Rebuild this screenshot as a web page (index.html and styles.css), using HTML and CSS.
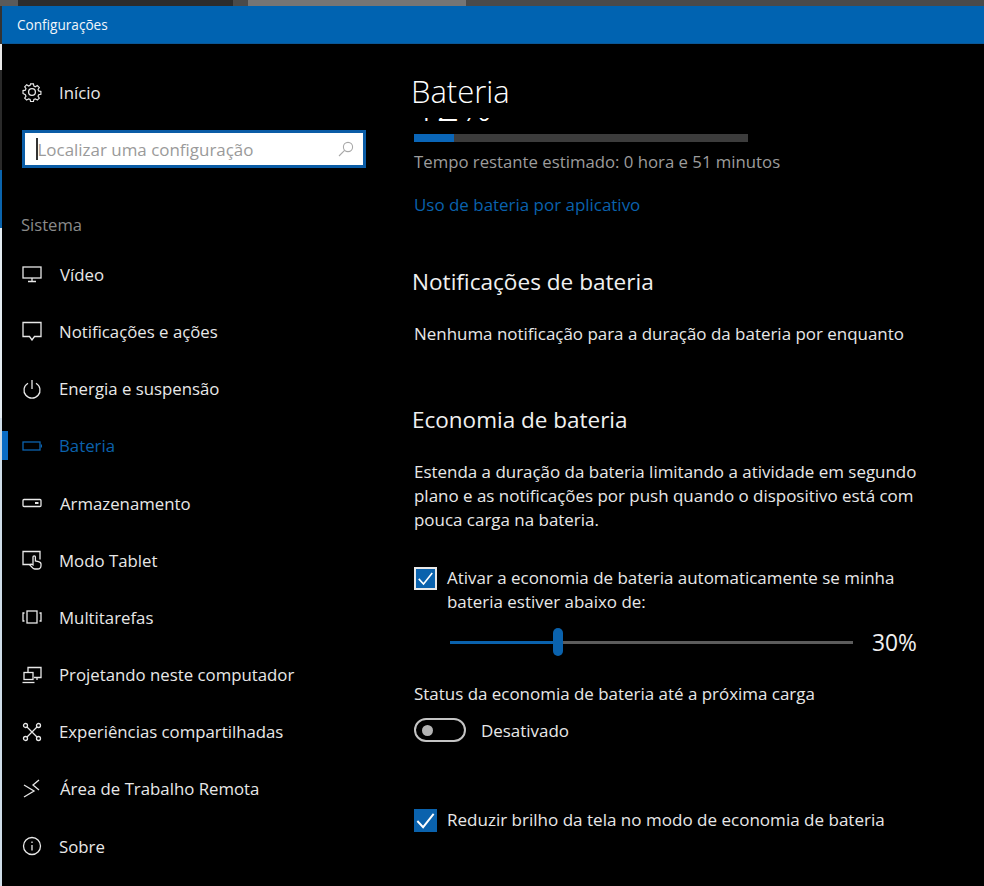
FILE: index.html
```html
<!DOCTYPE html>
<html lang="pt-BR">
<head>
<meta charset="utf-8">
<title>Configurações</title>
<link rel="stylesheet" href="styles.css">
</head>
<body>
<div class="desktop">
  <div class="tabstrip">
    <span class="tab-a"></span>
    <span class="tab-b"></span>
    <span class="tab-c"></span>
  </div>
  <div class="desktop-body">
    <div class="edge">
      <span class="e e1"></span><span class="e e2"></span><span class="e e3"></span><span class="e e4"></span><span class="e e5"></span><span class="e e6"></span>
    </div>
    <div class="window">
      <header class="titlebar">Configurações</header>
      <div class="main">
        <nav class="nav">
          <a class="home">
            <svg class="ico" viewBox="0 0 20 20"><path d="M8.4 1h3.2l.5 2.5 1.6.7 2.2-1.4 2.2 2.3-1.4 2.1.7 1.6 2.5.5v3.2l-2.5.5-.7 1.6 1.4 2.2-2.2 2.2-2.2-1.4-1.6.7-.5 2.4H8.4l-.5-2.4-1.6-.7-2.2 1.4-2.2-2.2 1.4-2.2-.7-1.6L0 11.6V8.4l2.6-.5.7-1.6-1.4-2.1 2.2-2.3 2.2 1.4 1.6-.7z" transform="translate(1 1) scale(.9)"/><circle cx="10" cy="10" r="3.4"/></svg>
            <span>Início</span>
          </a>
          <div class="search">
            <span class="caret"></span>
            <span class="placeholder">Localizar uma configuração</span>
            <svg class="search-ico" viewBox="0 0 16 16"><circle cx="10" cy="6" r="4.6"/><path d="M6.6 9.4 1 15"/></svg>
          </div>
          <div class="group">Sistema</div>
          <ul class="menu">
            <li class="item"><svg class="ico" viewBox="0 0 20 20"><rect x="1" y="3" width="18" height="11"/><path d="M10 14v3M6 17.5h8"/></svg><span class="tx-v">Vídeo</span></li>
            <li class="item"><svg class="ico" viewBox="0 0 20 20"><path d="M1 1.5h18v14h-6.5L10 19l-2.5-3.5H1z"/></svg><span>Notificações e ações</span></li>
            <li class="item"><svg class="ico" viewBox="0 0 20 20"><path d="M6 4.2a8 8 0 1 0 8 0M10 1v9"/></svg><span>Energia e suspensão</span></li>
            <li class="item active"><svg class="ico" viewBox="0 0 20 20"><rect x="1" y="6" width="17" height="8"/><path d="M19.4 8.5v3"/></svg><span>Bateria</span></li>
            <li class="item"><svg class="ico" viewBox="0 0 20 20"><rect x="1" y="6.5" width="18" height="7" rx="1"/><path d="M13 10h3.5" class="thick"/></svg><span class="tx-v">Armazenamento</span></li>
            <li class="item"><svg class="ico" viewBox="0 0 20 20"><path d="M8 14.500H1V1.500h17v8"/><path d="M13 19c-2 0-3-1.500-5-4l1-1 2 1V7a1.200 1.200 0 0 1 2.400 0v4l3 .6c1.500.3 2.600 1 2.600 2.400v1.500c0 2-1.500 3.500-3.500 3.500z"/></svg><span>Modo Tablet</span></li>
            <li class="item"><svg class="ico" viewBox="0 0 20 20"><rect x="5" y="4" width="10" height="12"/><path d="M2.5 6H1v8h1.5M17.5 6H19v8h-1.5"/></svg><span>Multitarefas</span></li>
            <li class="item"><svg class="ico" viewBox="0 0 20 20"><path d="M6 7V2.500h13v10h-7M15 12.500v2.500"/><rect x="2" y="7.500" width="9" height="7"/><path d="M0.500 17.500h12"/></svg><span>Projetando neste computador</span></li>
            <li class="item"><svg class="ico" viewBox="0 0 20 20"><circle cx="3.500" cy="3.500" r="2"/><circle cx="16.500" cy="3.500" r="2"/><circle cx="3.500" cy="16.500" r="2"/><circle cx="16.500" cy="16.500" r="2"/><path d="M5 5l10 10M15 5 5 15"/></svg><span>Experiências compartilhadas</span></li>
            <li class="item"><svg class="ico" viewBox="0 0 20 20"><path d="M2 6l10 6-10 6M17 1l-6 5 6 5"/></svg><span class="tx-v">Área de Trabalho Remota</span></li>
            <li class="item"><svg class="ico" viewBox="0 0 20 20"><circle cx="10" cy="10" r="8.500"/><path d="M10 9v5.500M10 5.500v1.500"/></svg><span>Sobre</span></li>
          </ul>
        </nav>
        <main class="content">
          <h1 class="page-title">Bateria</h1>
          <div class="clip"><div class="percent">12%</div></div>
          <div class="bar"><div class="bar-fill" style="width:12%"></div></div>
          <p class="estimate">Tempo restante estimado: 0 hora e 51 minutos</p>
          <a class="link">Uso de bateria por aplicativo</a>
          <h2 class="h-notif">Notificações de bateria</h2>
          <p class="none">Nenhuma notificação para a duração da bateria por enquanto</p>
          <h2 class="h-saver">Economia de bateria</h2>
          <p class="desc">Estenda a duração da bateria limitando a atividade em segundo plano e as notificações por push quando o dispositivo está com pouca carga na bateria.</p>
          <div class="check-row">
            <span class="check outlined"><svg viewBox="0 0 24 24"><path d="M3.500 12.500 9.500 19 20.500 5"/></svg></span>
            <span class="check-label">Ativar a economia de bateria automaticamente se minha bateria estiver abaixo de:</span>
          </div>
          <div class="slider-row">
            <div class="slider"><div class="fill"></div><div class="thumb"></div><div class="rest"></div></div>
            <span class="value">30%</span>
          </div>
          <p class="status">Status da economia de bateria até a próxima carga</p>
          <div class="toggle-row"><span class="toggle"><span class="knob"></span></span><span>Desativado</span></div>
          <div class="check-row last">
            <span class="check"><svg viewBox="0 0 24 24"><path d="M3.500 12.500 9.500 19 20.500 5"/></svg></span>
            <span class="check-label">Reduzir brilho da tela no modo de economia de bateria</span>
          </div>
        </main>
      </div>
    </div>
  </div>
</div>
</body>
</html>
```
FILE: styles.css
```css
* { box-sizing: border-box; }
html, body { margin: 0; padding: 0; height: 100%; background: #000; overflow: hidden; }
body { font-family: "Open Sans", "Noto Sans", sans-serif; color: #e8e8e8; font-size: 16.950px; }
ul { list-style: none; margin: 0; padding: 0; }
p, h1, h2 { margin: 0; font-weight: 400; }

.desktop { width: 984px; height: 886px; display: flex; flex-direction: column; }
.tabstrip { height: 6px; background: #4a4a4a; display: flex; flex: none; }
.tab-a { width: 18px; background: #5a5a5a; }
.tab-b { width: 215px; background: #2c2c2c; margin-right: 15px; }
.tab-c { width: 218px; background: #757575; }
.desktop-body { flex: 1; display: flex; min-height: 0; }
.edge { width: 2px; flex: none; display: flex; flex-direction: column; }
.e { display: block; }
.e1 { height: 38px; background: #333; }
.e2 { height: 26px; background: #e8e8e8; }
.e3 { height: 100px; background: #2a2a2a; }
.e4 { height: 58px; background: #0a64ad; }
.e5 { height: 190px; background: #e4ecf2; }
.e6 { flex: 1; background: #cfdde8; }

.window { flex: 1; display: flex; flex-direction: column; min-width: 0; }
.titlebar { height: 38px; flex: none; background: #0063b1; color: #f2f6fa; font-size: 13.600px; line-height: 38px; padding-left: 15px; border-bottom: 1px solid #0b5796; }
.main { flex: 1; display: flex; min-height: 0; background: #000; }

.nav { width: 410px; flex: none; display: flex; flex-direction: column; font-size: 16.800px; }
.home { display: flex; align-items: center; height: 40px; margin-top: 28px; padding-left: 20px; gap: 17px; }
.ico { width: 20px; height: 20px; flex: none; fill: none; stroke: #e8e8e8; stroke-width: 1.300; }
.search { margin: 18px 0 0 20px; width: 344px; height: 38px; background: #fff; border: 3px solid #0a5ca6; display: flex; align-items: center; padding: 0 9px 0 11px; color: #9a9a9a; font-size: 16.950px; }
.caret { width: 1.500px; height: 22px; background: #333; flex: none; }
.placeholder { flex: 1; }
.search-ico { width: 16px; height: 16px; fill: none; stroke: #a8a8a8; stroke-width: 1.100; }
.group { margin: 45px 0 0 19px; color: #8a8a8a; height: 24px; line-height: 24px; font-size: 16.600px; }
.menu { margin-top: 8.700px; }
.item { height: 57.200px; display: flex; align-items: center; gap: 17px; padding-left: 20px; position: relative; }
.tx-v { margin-left: 1px; }
.item.active { color: #0b62ad; }
.item.active .ico { stroke: #0b62ad; }
.item.active::before { content: ""; position: absolute; left: 0; top: 14px; width: 6px; height: 29px; background: #0a6cc4; }
.thick { stroke-width: 2; }

.content { flex: 1; padding-left: 2px; min-width: 0; }
.page-title { font-size: 31px; color: #fff; height: 42px; line-height: 42px; margin-top: 26px; margin-left: -3px; font-weight: 300; }
.clip { height: 4px; margin-top: 6px; overflow: hidden; }
.percent { font-size: 40px; line-height: 40px; color: #fff; margin-top: -32px; font-weight: 300; }
.bar { width: 334px; height: 8px; background: #3c3c3c; margin-top: 12px; }
.bar-fill { height: 100%; background: #0a66b8; }
.estimate { color: #9c9c9c; margin-top: 8px; line-height: 24px; font-size: 16.750px; }
.link { display: block; color: #0a62ad; margin-top: 19px; line-height: 24px; }
.h-notif { font-size: 22.600px; color: #f0f0f0; margin-top: 50px; margin-left: -2px; line-height: 30px; }
.none { margin-top: 25px; line-height: 24px; }
.h-saver { font-size: 22.500px; color: #f0f0f0; margin-top: 59px; margin-left: -2px; line-height: 30px; }
.desc { margin-top: 25px; width: 520px; line-height: 24px; }
.check-row { display: flex; gap: 10px; margin-top: 34px; align-items: flex-start; width: 500px; }
.check { width: 23px; height: 23px; flex: none; background: #0a62ad; display: block; margin-top: 1px; }
.check.outlined { border: 2px solid #e8e8e8; }
.check svg { display: block; width: 100%; height: 100%; fill: none; stroke: #fff; stroke-width: 2; }
.check-label { line-height: 24px; }
.slider-row { display: flex; align-items: center; margin: 12px 0 0 36px; height: 32px; }
.slider { width: 403px; display: flex; align-items: center; height: 28px; }
.fill { width: 103px; height: 3px; background: #0a62ad; }
.thumb { width: 10px; height: 28px; border-radius: 5px; background: #0a62ad; flex: none; }
.rest { flex: 1; height: 3px; background: #5c5c5c; }
.value { font-size: 22.800px; color: #f0f0f0; margin-left: 19px; }
.status { margin-top: 24px; line-height: 24px; }
.toggle-row { display: flex; align-items: center; gap: 15px; margin-top: 12px; height: 24px; }
.toggle { width: 52px; height: 24px; border: 2px solid #c4c4c4; border-radius: 12px; display: flex; align-items: center; padding-left: 6px; }
.knob { width: 11px; height: 11px; border-radius: 50%; background: #b4b4b4; }
.check-row.last { margin-top: 66px; width: auto; font-size: 17.050px; }
```
